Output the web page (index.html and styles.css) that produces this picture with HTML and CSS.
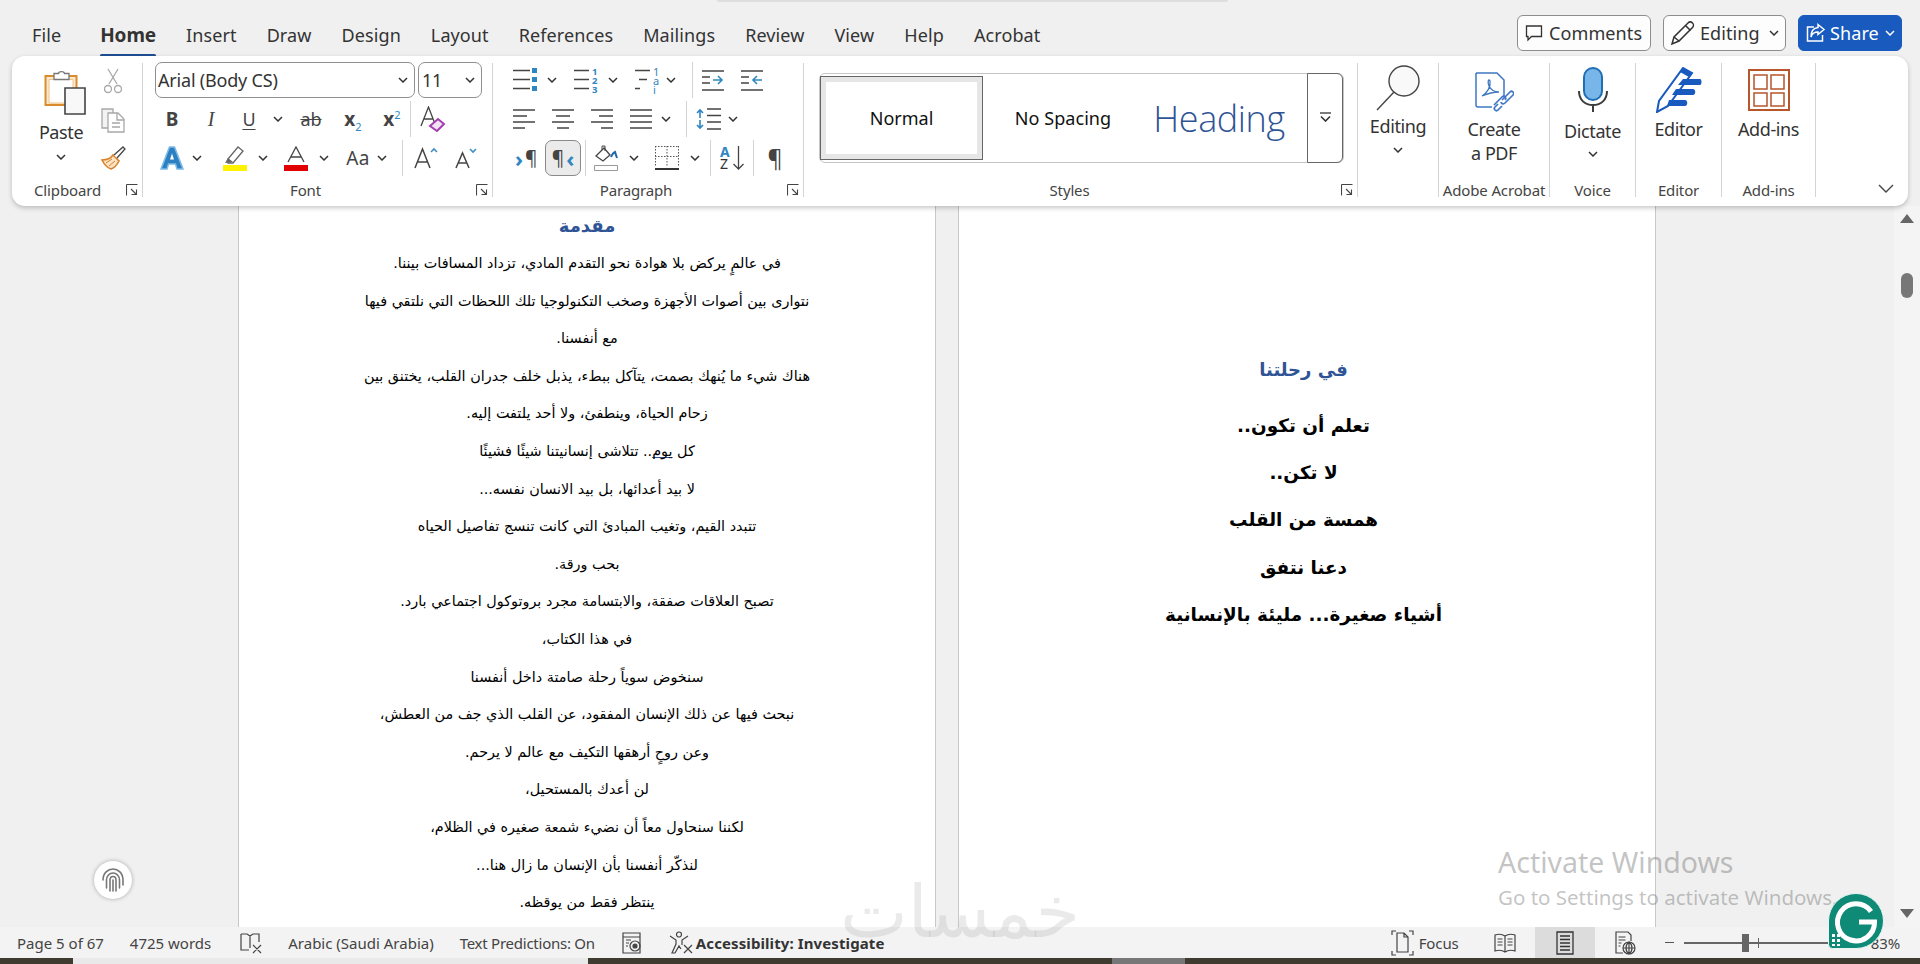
FILE: index.html
```html
<!DOCTYPE html>
<html lang="en">
<head>
<meta charset="utf-8">
<title>Word</title>
<link rel="stylesheet" href="styles.css">
</head>
<body>
<div class="app">
  <header class="topbar">
    <nav class="tabs">
      <span class="tab tab-file">File</span>
      <span class="tab tab-active">Home</span>
      <span class="tab">Insert</span>
      <span class="tab">Draw</span>
      <span class="tab">Design</span>
      <span class="tab">Layout</span>
      <span class="tab">References</span>
      <span class="tab">Mailings</span>
      <span class="tab">Review</span>
      <span class="tab">View</span>
      <span class="tab">Help</span>
      <span class="tab">Acrobat</span>
    </nav>
    <div class="actions">
      <button class="act act-comments">
        <svg width="18" height="18" viewBox="0 0 18 18" fill="none" stroke="#333" stroke-width="1.3"><path d="M1.5 2h15v10.5H6.500l-3.500 3.500v-3.500H1.500z"/></svg>
        Comments
      </button>
      <button class="act act-editing">
        <svg width="26" height="26" viewBox="0 0 26 26" fill="none" stroke="#333" stroke-width="1.5"><path d="M2 24l2-7L18 3c1.500-1.500 3.500-1 4.500 0s1.500 3 0 4.500L9 21z"/><path d="M15.500 5.500l5 5M4 17l5 4"/></svg>
        Editing
        <svg class="chev" viewBox="0 0 10 6"><path d="M1 1l4 4 4-4"/></svg>
      </button>
      <button class="act act-share">
        <svg width="20" height="20" viewBox="0 0 20 20" fill="none" stroke="#fff" stroke-width="1.500"><path d="M8 4H1.500v14h15v-6M12 1.500l6 5-6 5V9c-3.500 0-6 1.500-7 5 0-6 3-9 7-9.500z"/></svg>
        Share
        <svg class="chev chev-w" viewBox="0 0 10 6"><path d="M1 1l4 4 4-4"/></svg>
      </button>
    </div>
  </header>

  <section class="ribbon">
    <div class="group g-clip">
      <div class="g-body clip-body">
        <div class="big paste">
          <svg width="42" height="46" viewBox="0 0 42 46" fill="none"><path d="M1.500 7h31v29h-31z" fill="#fbe9cf" stroke="#d98c2b" stroke-width="2"/><path d="M5 10.500h24V34H5z" fill="#fff" stroke="#f0c489"/><path d="M10 4.500h4.500C15 2 20 2 20.500 4.500H25v6H10z" fill="#fff" stroke="#777" stroke-width="1.300"/><path d="M21 19h20v26H21z" fill="#f8f8f8" stroke="#444" stroke-width="1.600"/></svg>
          <span class="big-label">Paste</span>
          <svg class="chev" viewBox="0 0 10 6"><path d="M1 1l4 4 4-4"/></svg>
        </div>
        <div class="clip-tools">
          <svg width="18" height="26" viewBox="0 0 18 26" fill="none" stroke="#a8a8a8" stroke-width="1.300"><path d="M4 1l9 15M14 1L5 16"/><circle cx="4" cy="21" r="3.500"/><circle cx="14" cy="21" r="3.500"/></svg>
          <svg width="26" height="26" viewBox="0 0 26 26" fill="none" stroke="#a8a8a8" stroke-width="1.300"><path d="M2 2h11v19H2z" fill="#f3f3f3"/><path d="M8 6h10l6 6v13H8z" fill="#fff"/><path d="M17 6v7h7M12 16h8M12 20h8"/></svg>
          <svg width="26" height="24" viewBox="0 0 26 24" fill="none"><path d="M2 14c5 0 9-2 11-5l6 6c-2 4-5 7-8 8-3-1-7-5-9-9z" fill="#fbe3c4" stroke="#d9822b" stroke-width="1.600"/><path d="M6 17l6-4M9 20l6-5" stroke="#d9822b"/><path d="M14 9l9-8 2 2-8 9" fill="#fff" stroke="#444" stroke-width="1.300"/></svg>
        </div>
      </div>
      <div class="g-label">Clipboard<svg class="launch" viewBox="0 0 12 12"><path d="M.5.500h11M.5.500v11M5 5l5.500 5.500M10.500 5.500v5h-5"/></svg></div>
    </div>

    <div class="group g-font">
      <div class="g-body font-body">
        <div class="font-row1">
          <div class="combo combo-font"><span>Arial (Body CS)</span><svg class="chev" viewBox="0 0 10 6"><path d="M1 1l4 4 4-4"/></svg></div>
          <div class="combo combo-size"><span>11</span><svg class="chev" viewBox="0 0 10 6"><path d="M1 1l4 4 4-4"/></svg></div>
        </div>
        <div class="tool-row font-row2">
          <span class="fi fi-b">B</span>
          <span class="fi fi-i">I</span>
          <span class="fi fi-u">U</span>
          <svg class="chev" viewBox="0 0 10 6"><path d="M1 1l4 4 4-4"/></svg>
          <span class="fi fi-s">ab</span>
          <span class="fi fi-x">x<sub>2</sub></span>
          <span class="fi fi-x">x<sup>2</sup></span>
          <i class="sep"></i>
          <svg width="26" height="26" viewBox="0 0 26 26" fill="none"><path d="M1 20L8.500 1 15 18M3.500 13h9" stroke="#444" stroke-width="1.300"/><path d="M10 20l8-7 6 5-7 7z" fill="#f3e2f6" stroke="#a33fb0" stroke-width="2"/></svg>
        </div>
        <div class="tool-row font-row3">
          <svg width="24" height="24" viewBox="0 0 24 24"><path d="M1 23L9.500 1h5L23 23h-6l-1.500-5h-7L7 23z" fill="#2c7fc1" stroke="#7dbbe6" stroke-width="1.500"/><path d="M10 13.500l2-6 2 6z" fill="#fff"/></svg>
          <svg class="chev" viewBox="0 0 10 6"><path d="M1 1l4 4 4-4"/></svg>
          <svg width="24" height="25" viewBox="0 0 24 25"><path d="M5 13L15 1l5 4-10 12H5z" fill="#fff" stroke="#666" stroke-width="1.300"/><path d="M2 17l3-5 5 4z" fill="#666"/><path d="M0 19h24v6H0z" fill="#fff200"/></svg>
          <svg class="chev" viewBox="0 0 10 6"><path d="M1 1l4 4 4-4"/></svg>
          <svg width="24" height="25" viewBox="0 0 24 25"><path d="M4 16L12 1l8 15M7 11h10" fill="none" stroke="#444" stroke-width="1.300"/><path d="M0 19h24v6H0z" fill="#e00000"/></svg>
          <svg class="chev" viewBox="0 0 10 6"><path d="M1 1l4 4 4-4"/></svg>
          <span class="fi fi-aa">Aa</span>
          <svg class="chev" viewBox="0 0 10 6"><path d="M1 1l4 4 4-4"/></svg>
          <i class="sep"></i>
          <svg width="24" height="22" viewBox="0 0 24 22" fill="none"><path d="M1 21L8.500 2 16 21M3.500 15h10" stroke="#444" stroke-width="1.500"/><path d="M17 5l3-3 3 3" stroke="#3d8fc4" stroke-width="1.600"/></svg>
          <svg width="22" height="22" viewBox="0 0 22 22" fill="none"><path d="M1 21l6.500-15L14 21M3 16h9" stroke="#444" stroke-width="1.500"/><path d="M15 2l3 3 3-3" stroke="#3d8fc4" stroke-width="1.600"/></svg>
        </div>
      </div>
      <div class="g-label">Font<svg class="launch" viewBox="0 0 12 12"><path d="M.5.500h11M.5.500v11M5 5l5.500 5.500M10.500 5.500v5h-5"/></svg></div>
    </div>

    <div class="group g-para">
      <div class="g-body para-body">
        <div class="tool-row para-row1">
          <svg width="24" height="24" viewBox="0 0 24 24"><path d="M0 2.500h17M0 11.500h17M0 20.500h17" stroke="#444" stroke-width="1.300"/><path d="M19 0h5v5h-5zM19 9h5v5h-5zM19 18h5v5h-5z" fill="#2f86c1"/></svg>
          <svg class="chev" viewBox="0 0 10 6"><path d="M1 1l4 4 4-4"/></svg>
          <span class="lst"><svg width="16" height="24" viewBox="0 0 16 24"><path d="M0 2.500h15M0 11.500h15M0 20.500h15" stroke="#444" stroke-width="1.300"/></svg><span class="nums">1<br>2<br>3</span></span>
          <svg class="chev" viewBox="0 0 10 6"><path d="M1 1l4 4 4-4"/></svg>
          <span class="lst"><svg width="16" height="24" viewBox="0 0 16 24"><path d="M0 2.500h15M4 11.500h8M0 20.500h5" stroke="#444" stroke-width="1.300"/></svg><span class="nums nums-ml">1<br>a<br>i</span></span>
          <svg class="chev" viewBox="0 0 10 6"><path d="M1 1l4 4 4-4"/></svg>
          <i class="sep"></i>
          <svg width="22" height="21" viewBox="0 0 22 21" fill="none"><path d="M0 1h22M0 7h8M0 13h8M0 20h22" stroke="#444" stroke-width="1.300"/><path d="M11 10h9M16 6l4 4-4 4" stroke="#2f86c1" stroke-width="1.600"/></svg>
          <svg width="22" height="21" viewBox="0 0 22 21" fill="none"><path d="M0 1h22M0 7h8M0 13h8M0 20h22" stroke="#444" stroke-width="1.300"/><path d="M21 10h-9M16 6l-4 4 4 4" stroke="#2f86c1" stroke-width="1.600"/></svg>
        </div>
        <div class="tool-row para-row2">
          <svg width="22" height="20" viewBox="0 0 22 20" stroke="#444" stroke-width="1.300"><path d="M0 1h22M0 7h14M0 13h22M0 19h12"/></svg>
          <svg width="22" height="20" viewBox="0 0 22 20" stroke="#444" stroke-width="1.300"><path d="M0 1h22M4 7h14M0 13h22M5 19h12"/></svg>
          <svg width="22" height="20" viewBox="0 0 22 20" stroke="#444" stroke-width="1.300"><path d="M0 1h22M8 7h14M0 13h22M10 19h12"/></svg>
          <svg width="22" height="20" viewBox="0 0 22 20" stroke="#444" stroke-width="1.300"><path d="M0 1h22M0 7h22M0 13h22M0 19h22"/></svg>
          <svg class="chev" viewBox="0 0 10 6"><path d="M1 1l4 4 4-4"/></svg>
          <i class="sep"></i>
          <svg width="26" height="22" viewBox="0 0 26 22" fill="none"><path d="M11 1h14M11 7.500h14M11 14h14M11 21h14" stroke="#444" stroke-width="1.300"/><path d="M4 2v8M1 5l3-3 3 3M4 12v8M1 17l3 3 3-3" stroke="#2f86c1" stroke-width="1.600"/></svg>
          <svg class="chev" viewBox="0 0 10 6"><path d="M1 1l4 4 4-4"/></svg>
        </div>
        <div class="tool-row para-row3">
          <span class="pil pil-ltr"><b class="pil-arrow">›</b>¶</span>
          <span class="pil pil-on">¶<b class="pil-arrow">‹</b></span>
          <i class="sep"></i>
          <svg width="26" height="26" viewBox="0 0 26 26" fill="none"><path d="M3 11l8-8 6 7-7 6z" fill="#fff" stroke="#444" stroke-width="1.300"/><path d="M9 5V1h3v5" stroke="#444"/><path d="M18 12c1-3 2-4 4-5l2 6" stroke="#1f6aa8" stroke-width="2"/><path d="M1.500 20.500h23v5h-23z" stroke="#999"/></svg>
          <svg class="chev" viewBox="0 0 10 6"><path d="M1 1l4 4 4-4"/></svg>
          <svg width="24" height="24" viewBox="0 0 24 24" fill="none"><path d="M.5 0v20M23.500 0v20M0 .5h24M12 0v20M0 10.500h24" stroke="#555" stroke-dasharray="1.500 1.500"/><path d="M0 23h24" stroke="#333" stroke-width="2"/></svg>
          <svg class="chev" viewBox="0 0 10 6"><path d="M1 1l4 4 4-4"/></svg>
          <i class="sep"></i>
          <span class="sort"><span class="sort-az"><b class="sort-a">A</b><b class="sort-z">Z</b></span><svg width="11" height="24" viewBox="0 0 11 24" fill="none" stroke="#444" stroke-width="1.300"><path d="M5.500 0v23M.5 18l5 5 5-5"/></svg></span>
          <i class="sep"></i>
          <span class="pil pil-big">¶</span>
        </div>
      </div>
      <div class="g-label">Paragraph<svg class="launch" viewBox="0 0 12 12"><path d="M.5.500h11M.5.500v11M5 5l5.500 5.500M10.500 5.500v5h-5"/></svg></div>
    </div>

    <div class="group g-styles">
      <div class="g-body styles-body">
        <div class="gallery">
          <div class="style style-normal"><span>Normal</span></div>
          <div class="style style-nospace">No Spacing</div>
          <div class="style style-heading">Heading</div>
          <div class="more"><svg width="13" height="10" viewBox="0 0 13 10" fill="none" stroke="#333" stroke-width="1.300"><path d="M1 1h11"/><path d="M2 4.500l4.500 4.500L11 4.500" stroke-width="1.600"/></svg></div>
        </div>
      </div>
      <div class="g-label">Styles<svg class="launch" viewBox="0 0 12 12"><path d="M.5.500h11M.5.500v11M5 5l5.500 5.500M10.500 5.500v5h-5"/></svg></div>
    </div>

    <div class="group g-edit">
      <div class="g-body col-body col-edit">
        <svg width="46" height="46" viewBox="0 0 46 46" fill="none" stroke="#444" stroke-width="1.400"><circle cx="29" cy="16" r="15" fill="#f9f9f9"/><path d="M19 27L2 45"/></svg>
        <span class="big-label">Editing</span>
        <svg class="chev" viewBox="0 0 10 6"><path d="M1 1l4 4 4-4"/></svg>
      </div>
      <div class="g-label"></div>
    </div>

    <div class="group g-pdf">
      <div class="g-body col-body col-pdf">
        <svg width="40" height="42" viewBox="0 0 40 42" fill="none" stroke="#3f77c4" stroke-width="1.500"><path d="M2 1h21l7 7v16M18 35H4a2 2 0 0 1-2-2V1"/><path d="M8 24c5-3 9-9 8-15-1-3-3 0-1 5 2 4 6 6 10 6-3 0-10 1-17 4z" stroke-width="1.300"/><path d="M20 33l8-8c2-2 5 1 3 3M28 34l-4 4c-2 2-5-1-3-3l3-3M28 28l8-8c2-2 5 1 3 3l-8 8c-2 2-4 0-4-1" stroke-width="1.700"/></svg>
        <span class="big-label stack">Create<br>a PDF</span>
      </div>
      <div class="g-label">Adobe Acrobat</div>
    </div>

    <div class="group g-voice">
      <div class="g-body col-body col-voice">
        <svg width="30" height="46" viewBox="0 0 30 46" fill="none"><rect x="6" y="1" width="18" height="32" rx="9" fill="#78b6ea" stroke="#1f6fb5" stroke-width="2"/><path d="M1 24c0 9 6 14 14 14s14-5 14-14M15 38v7" stroke="#3c3c3c" stroke-width="2"/></svg>
        <span class="big-label">Dictate</span>
        <svg class="chev" viewBox="0 0 10 6"><path d="M1 1l4 4 4-4"/></svg>
      </div>
      <div class="g-label">Voice</div>
    </div>

    <div class="group g-editor">
      <div class="g-body col-body col-editor">
        <svg width="46" height="46" viewBox="0 0 46 46"><path d="M1 45l2-11L27 1l9 5-24 33z" fill="#fff" stroke="#185abd" stroke-width="2"/><path d="M27 1l9 5-3 4-9-5z" fill="#185abd"/><path d="M27 12h17c2 0 2 6 0 6H22zM20 22h17c3 0 3 6 0 6H16zM13 33h16c3 0 3 6 0 6H11z" fill="#185abd"/></svg>
        <span class="big-label">Editor</span>
      </div>
      <div class="g-label">Editor</div>
    </div>

    <div class="group g-addins">
      <div class="g-body col-body col-add">
        <svg width="42" height="42" viewBox="0 0 42 42" fill="none" stroke="#b7552b"><path d="M1 1h40v40H1z" stroke-width="2"/><path d="M6 6h13v14H6zM23 6h13v14H23zM6 24h13v13H6zM23 24h13v13H23z" stroke-width="1.500"/></svg>
        <span class="big-label">Add-ins</span>
      </div>
      <div class="g-label">Add-ins</div>
    </div>

    <div class="collapse"><svg width="16" height="10" viewBox="0 0 16 10" fill="none" stroke="#444" stroke-width="1.400"><path d="M1 1l7 7 7-7"/></svg></div>
  </section>

  <main class="workspace">
    <div class="pages">
      <article class="page page-left" dir="rtl" lang="ar">
        <h2 class="ar-title">مقدمة</h2>
        <p>في عالمٍ يركض بلا هوادة نحو التقدم المادي، تزداد المسافات بيننا.</p>
        <p>نتوارى بين أصوات الأجهزة وصخب التكنولوجيا تلك اللحظات التي نلتقي فيها</p>
        <p>مع أنفسنا.</p>
        <p>هناك شيء ما يُنهك بصمت، يتآكل ببطء، يذبل خلف جدران القلب، يختنق بين</p>
        <p>زحام الحياة، وينطفئ، ولا أحد يلتفت إليه.</p>
        <p>كل <u class="proof">يوم</u>.. تتلاشى إنسانيتنا شيئًا فشيئًا</p>
        <p>لا بيد أعدائها، بل بيد الانسان نفسه...</p>
        <p>تتبدد القيم، وتغيب المبادئ التي كانت تنسج تفاصيل الحياه</p>
        <p>بحب ورقة.</p>
        <p>تصبح العلاقات صفقة، والابتسامة مجرد بروتوكول اجتماعي بارد.</p>
        <p>في هذا الكتاب،</p>
        <p>سنخوض سوياً رحلة صامتة داخل أنفسنا</p>
        <p>نبحث فيها عن ذلك الإنسان المفقود، عن القلب الذي جف من العطش،</p>
        <p>وعن روحٍ أرهقها التكيف مع عالم لا يرحم.</p>
        <p>لن أعدك بالمستحيل،</p>
        <p>لكننا سنحاول معاً أن نضيء شمعة صغيره في الظلام،</p>
        <p>لنذكّر أنفسنا بأن الإنسان ما زال هنا...</p>
        <p>ينتظر فقط من يوقظه.</p>
      </article>
      <article class="page page-right" dir="rtl" lang="ar">
        <h2 class="ar-title2">في رحلتنا</h2>
        <p>تعلم أن تكون..</p>
        <p>لا تكن..</p>
        <p>همسة من القلب</p>
        <p>دعنا نتفق</p>
        <p>أشياء صغيرة... مليئة بالإنسانية</p>
      </article>
    </div>
    <aside class="scrollbar">
      <i class="arrow-up"></i>
      <i class="thumb"></i>
      <i class="arrow-down"></i>
    </aside>
  </main>

  <footer class="status">
    <div class="st-left">
      <span>Page 5 of 67</span>
      <span>4725 words</span>
      <svg width="22" height="22" viewBox="0 0 22 22" fill="none" stroke="#444" stroke-width="1.200"><path d="M1 2h6l3 2 3-2h6v8M10 4v12M9 18H1V2M13 13l8 8M21 13l-8 8"/></svg>
      <span>Arabic (Saudi Arabia)</span>
      <span class="st-pred">Text Predictions: On</span>
      <svg width="22" height="22" viewBox="0 0 22 22" fill="none" stroke="#444" stroke-width="1.200"><path d="M2 1h17v20H2zM2 5h17M5 8h5M5 11h3M5 14h2"/><circle cx="14" cy="14" r="5"/><circle cx="14" cy="14" r="2" fill="#444"/></svg>
      <span class="st-acc"><svg width="24" height="23" viewBox="0 0 24 23" fill="none" stroke="#444" stroke-width="1.200"><circle cx="10" cy="3.500" r="2.500"/><path d="M1 5l6 4v4l-4 9h3l4-7 2 3M19 5l-6 4v5M15 14l8 8M23 14l-8 8"/></svg><b>Accessibility: Investigate</b></span>
    </div>
    <div class="st-right">
      <span class="st-focus"><svg width="23" height="26" viewBox="0 0 23 26" fill="none" stroke="#444" stroke-width="1.200"><path d="M1 5V1h4M22 5V1h-4M1 21v4h4M22 21v4h-4M6 3h7l4 4v15H6zM13 3v4h4"/></svg>Focus</span>
      <span class="st-view"><svg width="22" height="20" viewBox="0 0 22 20" fill="none" stroke="#444" stroke-width="1.200"><path d="M11 3C8 1 4 1 1 2v16c3-1 7-1 10 1 3-2 7-2 10-1V2c-3-1-7-1-10 1zM11 3v16M3.500 6h5M3.500 9h5M3.500 12h5M13.500 6h5M13.500 9h5M13.500 12h5"/></svg></span>
      <span class="st-view st-on"><svg width="18" height="24" viewBox="0 0 18 24" fill="none" stroke="#333" stroke-width="1.300"><path d="M1 1h16v22H1zM4 5h10M4 8.500h10M4 12h10M4 15.500h10M4 19h10"/></svg></span>
      <span class="st-view"><svg width="22" height="24" viewBox="0 0 22 24" fill="none" stroke="#444" stroke-width="1.200"><path d="M9 22H2V1h12l3 3v6M4.500 6h7M4.500 9h7M4.500 12h3M4.500 15h2"/><circle cx="15" cy="17" r="6"/><path d="M9 17h12M15 11v12M15 11c-4 3-4 9 0 12M15 11c4 3 4 9 0 12"/></svg></span>
      <span class="zoom"><i class="zoom-minus"></i><span class="zoom-track"><i class="zoom-thumb"></i><i class="zoom-tick"></i></span></span>
      <span class="zoom-val">83%</span>
    </div>
  </footer>
  <div class="taskbar"><i class="tb-light tb-a"></i><i class="tb-light tb-b"></i></div>
</div>

<div class="titlebit"></div>
<div class="finger"><svg width="26" height="26" viewBox="0 0 26 26" fill="none" stroke="#777" stroke-width="1.600" stroke-linecap="round"><path d="M3 13C3 6 8 2 13 2s10 4 10 11v5M6.500 21v-8c0-4 3-7 6.500-7s6.500 3 6.500 7v8M10 24v-11c0-2 1-3.500 3-3.500s3 1.500 3 3.500v11M13 13v11"/></svg></div>
<div class="watermark" dir="rtl" lang="ar">خمسات</div>
<div class="activate"><div class="act-1">Activate Windows</div><div class="act-2">Go to Settings to activate Windows.</div></div>
<div class="grammarly"><svg width="56" height="56" viewBox="0 0 56 56"><path d="M28 .5a27.500 27.500 0 0 1 0 55H4.500a4 4 0 0 1-4-4V28A27.500 27.500 0 0 1 28 .5z" fill="#0f8a76" stroke="#e8f6f3" stroke-width="1"/><path d="M43 18.500A18.500 18.500 0 1 0 46.500 29H31" fill="none" stroke="#fff" stroke-width="5"/><path d="M4 41h3v3H4zM9 41h3v3H9zM4 46h3v3H4zM9 46h3v3H9zM4 51h3v2H4zM9 51h3v2H9z" fill="#fff"/></svg></div>
</body>
</html>
```
FILE: styles.css
```css
* { box-sizing: border-box; }
html, body { margin: 0; height: 100%; overflow: hidden; }
body { font-family: "Noto Sans", "Open Sans", sans-serif; color: #333; background: #f0f0f0; }
svg { display: block; flex: none; }
i { display: block; }
.app { width: 1920px; height: 964px; display: flex; flex-direction: column; position: relative; }

/* top */
.topbar { height: 56px; flex: none; display: flex; justify-content: space-between; }
.tabs { display: flex; padding: 18px 0 0 17px; font-size: 18px; }
.tab { padding: 0 15px; height: 38px; line-height: 34px; letter-spacing: .1px; position: relative; white-space: nowrap; color: #333; }
.tab-file { margin-right: 9px; }
.tab-active { font-weight: 700; font-size: 19px; letter-spacing: -.1px; }
.tab-active::after { content: ""; position: absolute; left: 15px; right: 15px; bottom: -1px; height: 3px; background: #1f4e96; border-radius: 2px; }
.actions { display: flex; gap: 12px; padding: 15px 18px 0 0; align-items: flex-start; }
.act { height: 36px; border: 1px solid #8d8d8d; border-radius: 6px; background: #fdfdfd; font: 18px "Noto Sans", sans-serif; color: #333; display: flex; align-items: center; padding: 0; white-space: nowrap; }
.act-comments { width: 134px; padding-left: 7px; gap: 6px; letter-spacing: .1px; }
.act-editing { width: 123px; padding-left: 6px; gap: 4px; letter-spacing: .1px; }
.act-share { width: 104px; padding-left: 7px; gap: 4px; background: #185abd; border-color: #185abd; color: #fff; letter-spacing: .1px; }
.act .chev { margin-left: auto; margin-right: 6px; }
.chev { width: 10px; height: 6px; fill: none; stroke: #333; stroke-width: 1.500; }
.chev-w { stroke: #fff; }

/* ribbon */
.ribbon { flex: none; height: 150px; margin: 0 12px; width: 1896px; background: #fff; border-radius: 13px; box-shadow: 0 2px 5px rgba(0,0,0,.22); display: flex; padding: 7px 0 9px; position: relative; z-index: 2; font-size: 18px; }
.group { flex: none; display: flex; flex-direction: column; border-right: 1px solid #d4d4d4; position: relative; }
.g-body { height: 117px; flex: none; }
.g-label { height: 17px; line-height: 21px; text-align: center; font-size: 15px; color: #444; letter-spacing: -.15px; white-space: nowrap; position: relative; }
.launch { position: absolute; right: 4px; top: 4px; width: 12px; height: 12px; fill: none; stroke: #444; stroke-width: 1.100; }
.g-clip { width: 131px; }
.g-font { width: 350px; }
.g-para { width: 311px; }
.g-styles { width: 554px; }
.g-edit { width: 81px; }
.g-pdf { width: 111px; }
.g-voice { width: 86px; }
.g-editor { width: 86px; }
.g-addins { width: 94px; }
.g-clip .g-label { padding-right: 19px; }
.g-font .g-label { padding-right: 24px; }
.g-para .g-label { padding-right: 24px; }
.g-styles .g-label { padding-right: 22px; }
.clip-body { display: flex; padding-left: 32px; }
.big { display: flex; flex-direction: column; align-items: center; }
.paste { width: 42px; padding-top: 6px; }
.big-label { line-height: 24px; white-space: nowrap; letter-spacing: -.4px; color: #333; }
.paste .big-label { margin-top: 5px; margin-right: 8px; }
.paste .chev { margin-top: 10px; margin-right: 8px; }
.clip-tools { margin-left: 12px; display: flex; flex-direction: column; align-items: center; gap: 13px; padding-top: 5px; width: 30px; }

.font-body { padding: 0 0 0 12px; display: flex; flex-direction: column; }
.font-row1 { display: flex; gap: 3px; height: 36px; margin-top: -1px; }
.combo { border: 1px solid #8f8f8f; border-radius: 7px; height: 36px; display: flex; align-items: center; justify-content: space-between; padding: 0 6px 0 2px; font-size: 18px; letter-spacing: -.2px; background: #fff; white-space: nowrap; }
.combo-font { width: 260px; }
.combo-size { width: 64px; padding-left: 3px; }
.tool-row { display: flex; align-items: center; height: 36px; margin-top: 3px; }
.sep { width: 1px; height: 36px; background: #d4d4d4; flex: none; }
.fi { color: #444; line-height: 1; white-space: nowrap; width: 24px; text-align: center; flex: none; }
.fi-b { font-weight: 700; font-size: 19px; }
.fi-i { font-style: italic; font-family: "Liberation Serif", serif; font-size: 20px; }
.fi-u { text-decoration: underline; text-underline-offset: 3px; font-size: 18px; }
.fi-s { text-decoration: line-through; font-size: 18px; width: 28px; }
.fi-x { font-weight: 700; font-size: 19px; }
.fi-x sub, .fi-x sup { font-size: 11px; font-weight: 400; color: #2f86c1; line-height: 0; }
.fi-aa { font-size: 19px; letter-spacing: .3px; }

.font-row2 > :nth-child(1) { margin-left: 5px; }
.font-row2 > :nth-child(2) { margin-left: 15px; }
.font-row2 > :nth-child(3) { margin-left: 14px; }
.font-row2 > :nth-child(4) { margin-left: 12px; }
.font-row2 > :nth-child(5) { margin-left: 14px; }
.font-row2 > :nth-child(6) { margin-left: 16px; }
.font-row2 > :nth-child(7) { margin-left: 15px; }
.font-row2 > :nth-child(8) { margin-left: 6px; }
.font-row2 > :nth-child(9) { margin-left: 9px; }

.font-row3 > :nth-child(1) { margin-left: 5px; }
.font-row3 > :nth-child(2) { margin-left: 8px; }
.font-row3 > :nth-child(3) { margin-left: 21px; }
.font-row3 > :nth-child(4) { margin-left: 11px; }
.font-row3 > :nth-child(5) { margin-left: 16px; }
.font-row3 > :nth-child(6) { margin-left: 11px; }
.font-row3 > :nth-child(7) { margin-left: 17px; }
.font-row3 > :nth-child(8) { margin-left: 7px; }
.font-row3 > :nth-child(9) { margin-left: 15px; }
.font-row3 > :nth-child(10) { margin-left: 11px; }
.font-row3 > :nth-child(11) { margin-left: 17px; }

.para-body { padding: 0 0 0 20px; }
.para-row1 { margin-top: -1px; }
.para-row1 > :nth-child(2) { margin-left: 10px; }
.para-row1 > :nth-child(3) { margin-left: 17px; }
.para-row1 > :nth-child(4) { margin-left: 10px; }
.para-row1 > :nth-child(5) { margin-left: 17px; }
.para-row1 > :nth-child(6) { margin-left: 7px; }
.para-row1 > :nth-child(7) { margin-left: 16px; }
.para-row1 > :nth-child(8) { margin-left: 9px; }
.para-row1 > :nth-child(9) { margin-left: 17px; }

.para-row2 > :nth-child(2), .para-row2 > :nth-child(3), .para-row2 > :nth-child(4) { margin-left: 17px; }
.para-row2 > :nth-child(5) { margin-left: 9px; }
.para-row2 > :nth-child(6) { margin-left: 15px; }
.para-row2 > :nth-child(7) { margin-left: 9px; }
.para-row2 > :nth-child(8) { margin-left: 6px; }

.para-row3 > :nth-child(1) { margin-left: 2px; }
.para-row3 > :nth-child(2) { margin-left: 12px; }
.para-row3 > :nth-child(3) { margin-left: 4px; }
.para-row3 > :nth-child(4) { margin-left: 7px; }
.para-row3 > :nth-child(5) { margin-left: 10px; }
.para-row3 > :nth-child(6) { margin-left: 16px; }
.para-row3 > :nth-child(7) { margin-left: 11px; }
.para-row3 > :nth-child(8) { margin-left: 10px; }
.para-row3 > :nth-child(9) { margin-left: 9px; }
.para-row3 > :nth-child(10) { margin-left: 9px; }
.para-row3 > :nth-child(11) { margin-left: 13px; }

.lst { display: flex; gap: 2px; align-items: center; width: 24px; flex: none; }
.nums { font-size: 9.500px; line-height: 9px; font-weight: 700; color: #2f86c1; }
.nums-ml { font-weight: 400; font-size: 11px; }
.pil { font-size: 19px; line-height: 1; color: #444; display: flex; align-items: center; flex: none; }
.pil-ltr { width: 18px; gap: 2px; }
.pil-arrow { color: #2f86c1; font-weight: 700; font-size: 22px; line-height: 16px; }
.pil-on { width: 36px; height: 36px; background: #ebebeb; border: 1px solid #8a8a8a; border-radius: 7px; justify-content: center; gap: 2px; }
.pil-big { font-size: 23px; width: 16px; justify-content: center; }
.sort { display: flex; gap: 3px; align-items: center; width: 24px; flex: none; }
.sort-az { display: flex; flex-direction: column; font-size: 14px; line-height: 12px; }
.sort-a { color: #2f86c1; font-weight: 700; }
.sort-z { color: #333; font-weight: 400; }

.styles-body { padding: 10px 0 0 15px; }
.gallery { width: 525px; height: 90px; border: 1px solid #c6c6c6; border-radius: 6px; display: flex; align-items: center; position: relative; }
.style { display: flex; align-items: center; justify-content: center; color: #111; white-space: nowrap; }
.style-normal { width: 163px; height: 84px; border: 1px solid #666; background: #fff; box-shadow: inset 0 0 0 5px #e6e6e6; font-size: 18px; }
.style-nospace { width: 160px; font-size: 18px; letter-spacing: .05px; }
.style-heading { width: 152px; font-size: 36px; font-weight: 300; color: #2f5496; font-family: "Open Sans", sans-serif; letter-spacing: -.4px; }
.more { width: 36px; height: 90px; margin-left: auto; border: 1px solid #666; border-radius: 0 6px 6px 0; display: flex; justify-content: center; padding-top: 38px; }

.col-body { display: flex; flex-direction: column; align-items: center; }
.col-edit { padding-top: 2px; }
.col-edit .big-label { margin-top: 3px; }
.col-edit .chev { margin-top: 9px; }
.col-pdf { padding-top: 9px; }
.col-pdf .big-label { margin-top: 3px; }
.stack { line-height: 24px; text-align: center; }
.col-voice { padding-top: 4px; }
.col-voice .big-label { margin-top: 6px; }
.col-voice .chev { margin-top: 8px; }
.col-editor { padding-top: 4px; }
.col-editor .big-label { margin-top: 4px; }
.col-add { padding-top: 6px; }
.col-add .big-label { margin-top: 6px; }
.collapse { position: absolute; right: 14px; bottom: 12px; }

/* doc */
.workspace { flex: 1; min-height: 0; display: flex; background: #f0f0f0; position: relative; z-index: 1; overflow: hidden; }
.pages { flex: 1; display: flex; gap: 22px; padding-left: 238px; }
.page { width: 698px; background: #fff; border: solid #c8c8c8; border-width: 0 1px; text-align: center; color: #000; font-family: "DejaVu Sans", "Liberation Sans", sans-serif; }
.page p { margin: 0; white-space: nowrap; }
.page-left { padding-top: 8px; font-size: 14.400px; }
.page-left p { height: 37.600px; line-height: 37.600px; }
.ar-title { margin: 0; height: 31px; line-height: 24px; font-size: 18px; color: #2f5496; font-weight: 700; }
.proof { text-decoration: underline; text-decoration-color: #2f5496; text-decoration-thickness: 1px; text-decoration-skip-ink: none; }
.page-right { padding: 148px 7px 0 0; font-size: 18.400px; font-weight: 700; }
.page-right p { height: 47.200px; line-height: 47.200px; }
.ar-title2 { margin: 0 0 16px; height: 32px; line-height: 32px; font-size: 18px; color: #2f5496; font-weight: 700; }
.scrollbar { width: 26px; flex: none; background: #f4f4f4; display: flex; flex-direction: column; align-items: center; padding: 8px 0 9px; position: relative; }
.arrow-up { width: 0; height: 0; border: 7px solid transparent; border-top: 0; border-bottom: 9px solid #666; }
.thumb { width: 12px; height: 25px; border-radius: 6px; background: #777; margin-top: 50px; }
.arrow-down { width: 0; height: 0; border: 7px solid transparent; border-bottom: 0; border-top: 9px solid #666; margin-top: auto; }

/* status */
.status { height: 31px; flex: none; background: #f3f3f3; display: flex; justify-content: space-between; font-size: 15px; color: #444; position: relative; z-index: 1; }
.st-left { display: flex; align-items: center; padding-left: 17px; gap: 26px; white-space: nowrap; }
.st-left > :nth-child(3) { margin-left: 3px; }
.st-pred { letter-spacing: -.25px; }
.st-acc { display: flex; align-items: center; gap: 3px; color: #333; }
.st-acc b { letter-spacing: .1px; }
.st-right { display: flex; align-items: center; padding-right: 20px; white-space: nowrap; }
.st-focus { display: flex; align-items: center; gap: 5px; margin-right: 16px; letter-spacing: -.1px; }
.st-view { width: 60px; height: 31px; display: flex; align-items: center; justify-content: center; }
.st-on { background: #dcdcdc; }
.zoom { display: flex; align-items: center; margin-left: 10px; gap: 10px; }
.zoom-minus { width: 9px; height: 1px; background: #555; }
.zoom-track { width: 146px; height: 2px; background: #666; position: relative; display: block; }
.zoom-thumb { position: absolute; left: 58px; top: -8px; width: 7px; height: 18px; background: #666; }
.zoom-tick { position: absolute; left: 74px; top: -4px; width: 1px; height: 10px; background: #666; }
.zoom-val { margin-left: 41px; letter-spacing: -.1px; }
.taskbar { height: 6px; flex: none; background: #3f3b30; display: flex; position: relative; }
.tb-light { position: absolute; top: 0; height: 6px; background: #e9e9e9; }
.tb-a { left: 73px; width: 515px; }
.tb-b { left: 1112px; width: 73px; background: #777; }

/* overlays */
.titlebit { position: absolute; left: 717px; top: 0; width: 511px; height: 2px; background: #ddd; border-radius: 0 0 4px 4px; }
.finger { position: absolute; left: 94px; top: 861px; width: 38px; height: 38px; border-radius: 50%; background: #fff; box-shadow: 0 0 4px rgba(0,0,0,.3); display: flex; align-items: center; justify-content: center; z-index: 3; }
.watermark { position: absolute; left: 840px; top: 872px; width: 240px; text-align: center; font-family: "DejaVu Sans", sans-serif; font-size: 72px; line-height: 80px; color: rgba(150,150,150,.2); z-index: 3; white-space: nowrap; }
.activate { position: absolute; left: 1498px; top: 842px; color: rgba(110,110,110,.42); z-index: 3; white-space: nowrap; }
.act-1 { font-size: 28.500px; line-height: 40px; }
.act-2 { font-size: 20.500px; line-height: 30px; }
.grammarly { position: absolute; left: 1828px; top: 893px; width: 56px; height: 56px; z-index: 4; }
```
